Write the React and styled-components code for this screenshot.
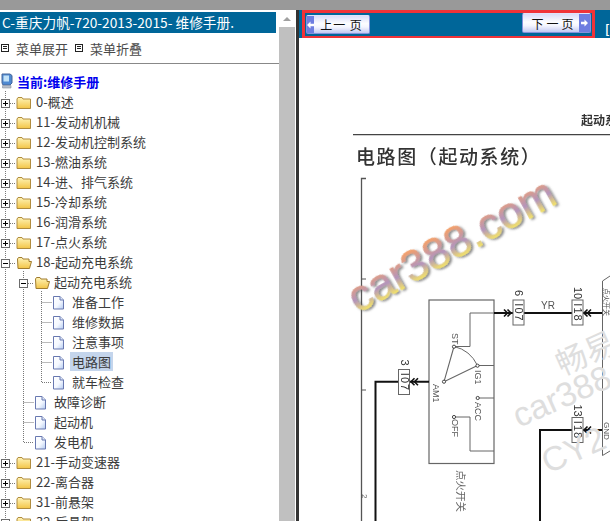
import styled, { createGlobalStyle } from "styled-components";

const FONT = `"Noto Sans CJK SC", "Liberation Sans", sans-serif`;
const LATIN = `"Liberation Sans", "Noto Sans CJK SC", sans-serif`;

const GlobalStyle = createGlobalStyle`
  html, body {
    margin: 0;
    padding: 0;
    background: #fff;
    overflow: hidden;
  }
`;

const Page = styled.div`
  display: grid;
  grid-template-columns: 296px 3px 1fr;
  grid-template-rows: 10px 1fr;
  width: 610px;
  height: 521px;
  overflow: hidden;
  font-family: ${FONT};
`;

const TopBar = styled.div`
  grid-column: 1 / -1;
  background: #999999;
`;

const Sidebar = styled.aside`
  display: flex;
  min-height: 0;
  overflow: hidden;
`;

const MenuPane = styled.div`
  width: 279px;
  flex: none;
  padding-top: 2px;
  overflow: hidden;
`;

const Title = styled.div`
  width: 276px;
  height: 21px;
  box-sizing: border-box;
  padding-left: 2px;
  background: #006699;
  color: #fff;
  font-size: 13.7px;
  line-height: 21px;
  white-space: nowrap;
`;

const MenuActions = styled.div`
  display: flex;
  align-items: center;
  height: 30px;
  border-bottom: 1px solid #888;
  padding-left: 1px;
`;

const ActionIcon = styled.svg`
  flex: none;
  width: 8px;
  height: 8px;
  margin-right: 7px;
`;

const ActionLink = styled.span`
  color: #4a4a4a;
  font-size: 13px;
  margin-right: 7px;
`;

const RootRow = styled.div`
  display: flex;
  align-items: center;
  height: 20px;
  margin-top: 7px;
  padding-left: 1px;
  gap: 4px;
  color: #0000ee;
  font-size: 13px;
  font-weight: 700;
`;

const Tree = styled.div`
  display: flex;
  flex-direction: column;
`;

const Row = styled.div`
  display: flex;
  align-items: center;
  height: 20px;
  color: #3c3c3c;
  font-size: 13px;
  white-space: nowrap;
`;

const Guide = styled.svg`
  flex: none;
  display: block;
  width: ${({ $w }) => $w}px;
  height: 20px;
`;

const IconSlot = styled.span`
  flex: none;
  display: flex;
  box-sizing: border-box;
  width: 20px;
  height: 20px;
  padding-top: 5px;
  align-items: flex-start;
`;

const Label = styled.span`
  padding: 0 2px;
  margin-left: -2px;
  line-height: 19px;
  background: ${({ $selected }) => ($selected ? "#c4d5ec" : "transparent")};
`;

const Scrollbar = styled.div`
  width: 16px;
  flex: none;
  margin-right: 1px;
  display: flex;
  flex-direction: column;
  background: #f2f2f2;
`;

const ScrollUp = styled.div`
  height: 17px;
  display: flex;
  align-items: center;
  justify-content: center;
  background: #fff;
  &::before {
    content: "";
    border: 4px solid transparent;
    border-top: 0;
    border-bottom: 4px solid #a0a0a0;
  }
`;

const ScrollThumb = styled.div`
  flex: 1;
  background: #c0c0c0;
`;

const Divider = styled.div`
  background: #333;
`;

const Reader = styled.main`
  display: flex;
  flex-direction: column;
  min-width: 0;
  overflow: hidden;
`;

const PagerBand = styled.div`
  display: flex;
  height: 28px;
  flex: none;
  padding-left: 3px;
  background: #006699;
`;

const PagerFrame = styled.div`
  display: flex;
  justify-content: space-between;
  width: 293px;
  box-sizing: border-box;
  border: 3px solid #f03338;
  border-bottom-width: 2px;
  padding: 0 1px;
`;

const PageButton = styled.button`
  display: flex;
  align-items: center;
  width: ${({ $next }) => ($next ? 69 : 64)}px;
  height: ${({ $next }) => ($next ? 20 : 19)}px;
  margin: ${({ $next }) => ($next ? "0" : "2px 0 0")};
  padding: 0;
  flex-direction: ${({ $next }) => ($next ? "row-reverse" : "row")};
  border: 1px solid #8492dc;
  border-top-color: #dfe3fb;
  border-radius: 2px;
  background: linear-gradient(#d9ddf9, #fdfdff 45%, #f4f5fe 65%, #c3c9f3);
  font-family: ${FONT};
  font-size: 12px;
  color: #111;
`;

const ButtonArrow = styled.span`
  display: flex;
  align-items: center;
  justify-content: center;
  align-self: stretch;
  flex: none;
  width: ${({ $next }) => ($next ? 11 : 7)}px;
  background: #6e7de0;
`;

const ButtonText = styled.span`
  flex: 1;
  text-align: center;
  padding-left: ${({ $next }) => ($next ? 6 : 0)}px;
  letter-spacing: ${({ $next }) => ($next ? 3 : 1)}px;
  white-space: pre;
`;

const BandEdge = styled.span`
  margin: auto 0 0 10px;
  color: #fff;
  font-size: 12px;
  font-weight: 700;
  line-height: 19px;
`;

const Paper = styled.svg`
  display: block;
  width: 311px;
  height: 483px;
  flex: none;
  font-family: ${FONT};
`;

const Scan = styled.g`
  filter: blur(0.4px);
`;

const MarkLayer = styled.g`
  filter: blur(0.4px);
`;

const ExpandGuide = ({ open }) => (
  <Guide $w={16} viewBox="0 0 16 20">
    <path d="M5.5 0V20M10 12.5H16" stroke="#777" strokeDasharray="1 1" fill="none" />
    <rect x="1.5" y="8.5" width="8" height="8" fill="#fff" stroke="#6c6c6c" />
    <path d="M3 12.5H8" stroke="#000" />
    {!open && <path d="M5.5 10V15" stroke="#000" />}
  </Guide>
);

const BranchGuide = ({ last }) => (
  <Guide $w={16} viewBox="0 0 16 20">
    <path d={last ? "M5.5 0V11.5H16" : "M5.5 0V20M5.5 11.5H16"} stroke="#777" strokeDasharray="1 1" fill="none" />
  </Guide>
);

const PipeGuide = () => (
  <Guide $w={18} viewBox="0 0 18 20">
    <path d="M5.5 0V20" stroke="#777" strokeDasharray="1 1" fill="none" />
  </Guide>
);

const FolderIcon = ({ open }) => (
  <svg width="16" height="14" viewBox="0 0 16 14">
    <defs>
      <linearGradient id="folderFill" x1="0" y1="0" x2="0" y2="1">
        <stop offset="0" stopColor="#fff4b8" />
        <stop offset="1" stopColor="#f3c548" />
      </linearGradient>
    </defs>
    {open ? (
      <path d="M1.5 3 L2.5 1.5 H6 L7 3 H13 V5.5 H15.5 L13.5 12.5 H2 Z" fill="url(#folderFill)" stroke="#a07c30" />
    ) : (
      <path d="M1 3 L2 1.5 H6 L7 3 H14.5 V12.5 H1 Z" fill="url(#folderFill)" stroke="#b08c3e" />
    )}
  </svg>
);

const DocIcon = () => (
  <svg width="13" height="14" viewBox="0 0 13 14">
    <defs>
      <linearGradient id="docFill" x1="0" y1="0" x2="1" y2="1">
        <stop offset="0" stopColor="#ffffff" />
        <stop offset="0.55" stopColor="#f4f8ff" />
        <stop offset="1" stopColor="#b4caf0" />
      </linearGradient>
    </defs>
    <path d="M1.5 0.5 H8 L11.5 4 V13 H1.5 Z" fill="url(#docFill)" stroke="#6878b0" />
    <path d="M8 0.5 V4 H11.5" fill="#dfe8f8" stroke="#6878b0" />
  </svg>
);

const ComputerIcon = () => (
  <svg width="12" height="16" viewBox="0 0 12 16">
    <path d="M1 1 H9 L11 2.5 V10 L9 12 H2 L1 10 Z" fill="#4f8ad2" stroke="#46669a" />
    <path d="M2.5 2.5 H8 V8.5 H2.5 Z" fill="#c2e2f8" />
    <path d="M1.5 12.5 H10 V15 H1.5 Z" fill="#b8bfca" stroke="#8b94a3" strokeWidth="0.6" />
  </svg>
);

const ListIcon = () => (
  <ActionIcon viewBox="0 0 8 8">
    <rect x="0.5" y="0.5" width="7" height="7" fill="#fff" stroke="#222" />
    <path d="M2 2.5H6M2 4.5H6" stroke="#222" />
  </ActionIcon>
);

const TREE = [
  { text: "0-概述" },
  { text: "11-发动机机械" },
  { text: "12-发动机控制系统" },
  { text: "13-燃油系统" },
  { text: "14-进、排气系统" },
  { text: "15-冷却系统" },
  { text: "16-润滑系统" },
  { text: "17-点火系统" },
  { text: "18-起动充电系统", open: true },
  { text: "起动充电系统", open: true, level: 1 },
  { text: "准备工作", level: 2, doc: true },
  { text: "维修数据", level: 2, doc: true },
  { text: "注意事项", level: 2, doc: true },
  { text: "电路图", level: 2, doc: true, selected: true },
  { text: "就车检查", level: 2, doc: true, last: true },
  { text: "故障诊断", level: 1, doc: true },
  { text: "起动机", level: 1, doc: true },
  { text: "发电机", level: 1, doc: true, last: true },
  { text: "21-手动变速器" },
  { text: "22-离合器" },
  { text: "31-前悬架" },
  { text: "32-后悬架" },
];

function TreeRow({ item }) {
  const level = item.level || 0;
  return (
    <Row>
      {level >= 1 && <PipeGuide />}
      {level >= 2 && <PipeGuide />}
      {item.doc ? <BranchGuide last={item.last} /> : <ExpandGuide open={item.open} />}
      <IconSlot>{item.doc ? <DocIcon /> : <FolderIcon open={item.open} />}</IconSlot>
      <Label $selected={item.selected}>{item.text}</Label>
    </Row>
  );
}

const ArrowHead = ({ x, y, dir }) => (
  <path
    d={`M${x + 3.5 * dir} ${y - 3.5} L${x} ${y} L${x + 3.5 * dir} ${y + 3.5} M${x + 7 * dir} ${y - 3.5} L${x + 3.5 * dir} ${y} L${x + 7 * dir} ${y + 3.5}`}
    fill="none"
    stroke="#111"
    strokeWidth="1.6"
  />
);

const Connector = ({ x, y, code, pin }) => (
  <g fontFamily={LATIN}>
    <rect x={x} y={y} width="11" height="25" fill="#fff" stroke="#666" strokeWidth="1" />
    <text transform={`translate(${x + 2} ${y + 12.5}) rotate(90)`} textAnchor="middle" fontSize="11" letterSpacing="1" fill="#333">
      {code}
    </text>
    <text transform={`translate(${x + 2} ${y - 7}) rotate(90)`} textAnchor="middle" fontSize="11" fill="#333">
      {pin}
    </text>
  </g>
);

const Terminal = ({ x, y }) => <circle cx={x} cy={y} r="1.6" fill="#fff" stroke="#333" strokeWidth="0.9" />;

const SideText = ({ x, y, size = 9, fill = "#555", children }) => (
  <text transform={`translate(${x} ${y}) rotate(90)`} fontSize={size} fill={fill} fontFamily={LATIN}>
    {children}
  </text>
);

function CircuitPage() {
  return (
    <Paper viewBox="299 38 311 483">
      <defs>
        <linearGradient id="markFill" x1="0" y1="0" x2="0" y2="1">
          <stop offset="0.2" stopColor="#f2a06c" />
          <stop offset="0.55" stopColor="#b394bc" />
          <stop offset="0.82" stopColor="#f4e468" />
        </linearGradient>
        <filter id="markShadow" x="-10%" y="-20%" width="120%" height="150%">
          <feDropShadow dx="1.5" dy="2" stdDeviation="1.2" floodColor="#555" floodOpacity="0.7" />
        </filter>
      </defs>
      <rect x="299" y="38" width="311" height="483" fill="#fff" />
      <Scan>
        <text x="581" y="125" fontSize="12" fontWeight="700" fill="#333">起动系统</text>
        <path d="M353 134.7H610" stroke="#444" strokeWidth="1.3" />
        <text x="356" y="164" fontSize="19" fontWeight="500" letterSpacing="1.6" fill="#333">电路图（起动系统）</text>

        <path d="M366 178.5H361.5V521" fill="none" stroke="#555" strokeWidth="1.3" />
        <path d="M361.5 279H366M361.5 390H366" stroke="#555" />
        <SideText x={362} y={494} size={8} fill="#666">2</SideText>

        <rect x="429" y="300" width="65" height="163.5" fill="#fff" stroke="#666" strokeWidth="1.2" />
        <g fill="none" stroke="#666" strokeWidth="1">
          <path d="M494 313H470V346.5H454" />
          <path d="M454 346.5L444 381.7L477.5 365.5" strokeWidth="1.1" />
          <path d="M477.5 365.5H494M478 398H494" />
          <path d="M454 417H470V451H494" />
          <path d="M454 346.5Q470 350 477.5 365.5" />
        </g>
        <Terminal x={454} y={346.7} />
        <Terminal x={477.5} y={365.7} />
        <Terminal x={444} y={381.7} />
        <Terminal x={477.7} y={398} />
        <Terminal x={454} y={417} />
        <SideText x={452} y={333}>ST</SideText>
        <SideText x={475} y={370}>IG1</SideText>
        <SideText x={433} y={384}>AM1</SideText>
        <SideText x={475} y={402}>ACC</SideText>
        <SideText x={452} y={419}>OFF</SideText>
        <SideText x={457} y={470} size={10.5} fill="#666">点火开关</SideText>

        <g fill="none" stroke="#111" strokeWidth="2">
          <path d="M494 313H602" />
          <path d="M429 381.7H375.5V521" />
          <path d="M602 430H540V521" />
        </g>
        <ArrowHead x={511} y={313} dir={-1} />
        <ArrowHead x={584} y={313} dir={1} />
        <ArrowHead x={411} y={381.7} dir={1} />
        <ArrowHead x={584} y={430} dir={1} />
        <Connector x={513} y={300} code="I07" pin="6" />
        <Connector x={572} y={300} code="I18" pin="10" />
        <Connector x={398.5} y={369.5} code="I07" pin="3" />
        <Connector x={572} y={417.5} code="I18" pin="13" />
        <text x="541" y="309" fontSize="10" fill="#555" fontFamily={LATIN}>YR</text>

        <path d="M610 276L602.5 281V455.5L610 451" fill="#fff" stroke="#666" strokeWidth="1" />
        <SideText x={604} y={288} size={7}>点火开关</SideText>
        <SideText x={604} y={422} size={8}>GND</SideText>
      </Scan>

      <g fill="#dedede" fontFamily={LATIN}>
        <text transform="translate(562 376) rotate(-24)" fontSize="31">畅易</text>
        <text transform="translate(519 428) rotate(-24)" fontSize="34">car388</text>
        <text transform="translate(548 474) rotate(-24)" fontSize="34">CY2</text>
      </g>

      <MarkLayer>
        <text
          transform="translate(358 314) rotate(-29)"
          fontFamily={LATIN}
          fontSize="44"
          fill="url(#markFill)"
          stroke="url(#markFill)"
          strokeWidth="0.4"
          filter="url(#markShadow)"
        >
          car388.com
        </text>
      </MarkLayer>
    </Paper>
  );
}

const ButtonChevron = ({ back }) => (
  <svg width="7" height="8" viewBox="0 0 8 8">
    <path d={back ? "M0 4L4 0V2.5H8V5.5H4V8Z" : "M8 4L4 0V2.5H0V5.5H4V8Z"} fill="#fff" />
  </svg>
);

export default function App() {
  return (
    <>
      <GlobalStyle />
      <Page>
        <TopBar />
        <Sidebar>
          <MenuPane>
            <Title>C-重庆力帆-720-2013-2015- 维修手册.</Title>
            <MenuActions>
              <ListIcon />
              <ActionLink>菜单展开</ActionLink>
              <ListIcon />
              <ActionLink>菜单折叠</ActionLink>
            </MenuActions>
            <RootRow>
              <ComputerIcon />
              当前:维修手册
            </RootRow>
            <Tree>
              {TREE.map((item) => (
                <TreeRow key={item.text + (item.level || 0)} item={item} />
              ))}
            </Tree>
          </MenuPane>
          <Scrollbar>
            <ScrollUp />
            <ScrollThumb />
          </Scrollbar>
        </Sidebar>
        <Divider />
        <Reader>
          <PagerBand>
            <PagerFrame>
              <PageButton>
                <ButtonArrow>
                  <ButtonChevron back />
                </ButtonArrow>
                <ButtonText>上一 页</ButtonText>
              </PageButton>
              <PageButton $next>
                <ButtonArrow $next>
                  <ButtonChevron />
                </ButtonArrow>
                <ButtonText $next>下一页</ButtonText>
              </PageButton>
            </PagerFrame>
            <BandEdge>[</BandEdge>
          </PagerBand>
          <CircuitPage />
        </Reader>
      </Page>
    </>
  );
}
